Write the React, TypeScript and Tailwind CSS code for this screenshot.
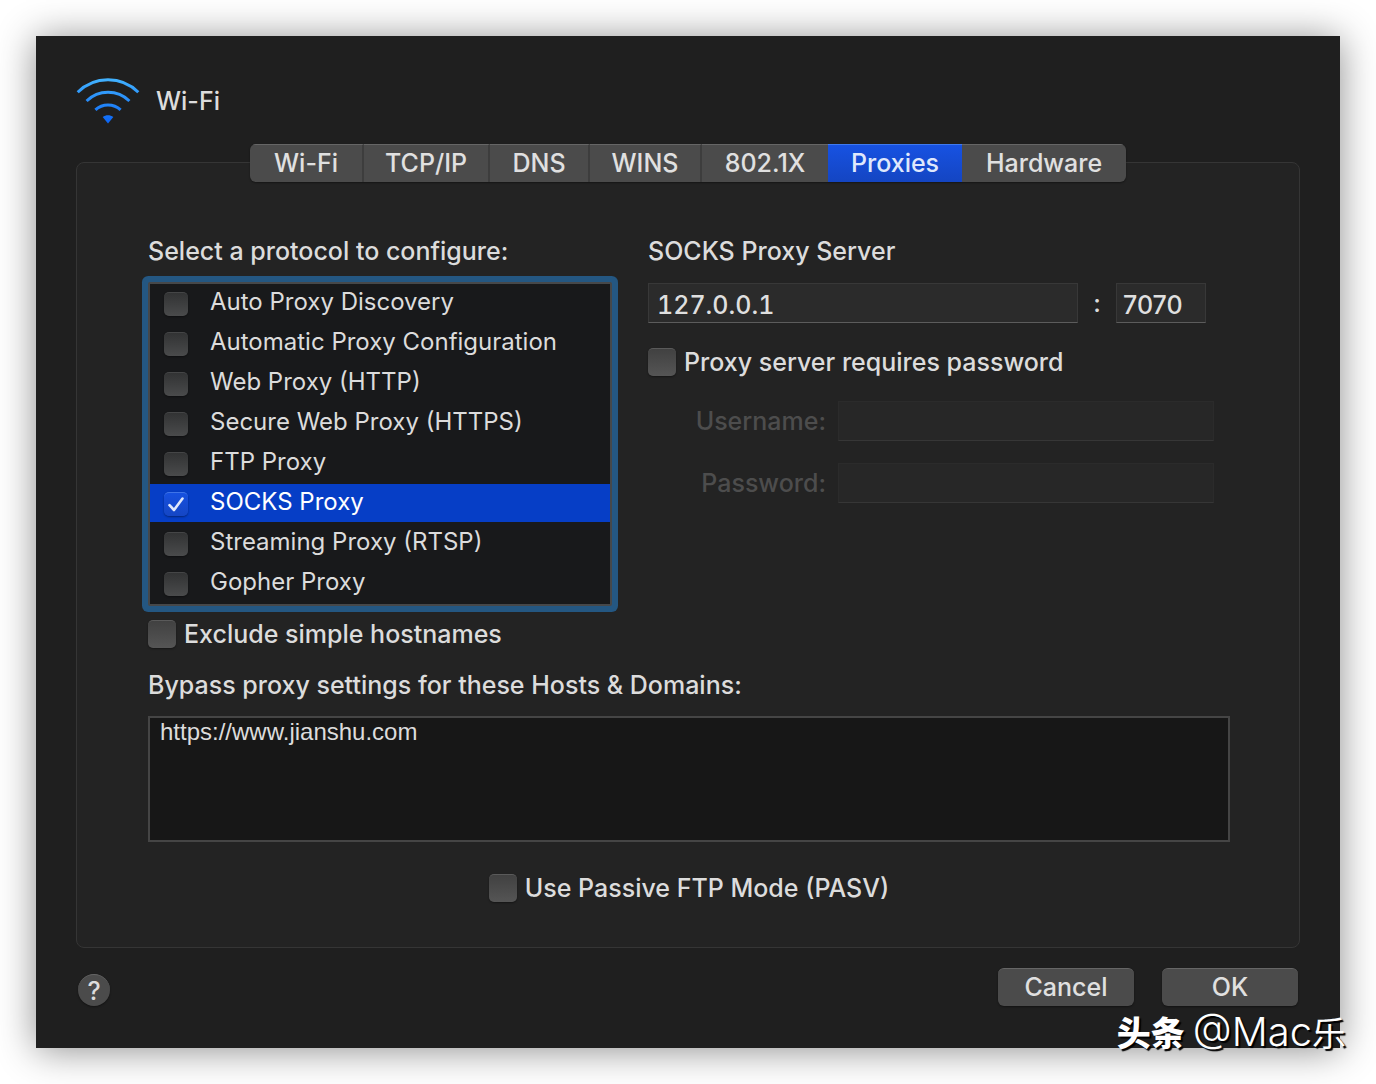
import React, { useState } from 'react';
import clsx from 'clsx';

const tabs = [
  { name: 'Wi-Fi', width: 'w-[114px]' },
  { name: 'TCP/IP', width: 'w-[126px]' },
  { name: 'DNS', width: 'w-[100px]' },
  { name: 'WINS', width: 'w-[112px]' },
  { name: '802.1X', width: 'w-[126px]' },
  { name: 'Proxies', width: 'w-[134px]' },
  { name: 'Hardware', width: 'w-[164px]' },
];

const protocols = [
  'Auto Proxy Discovery',
  'Automatic Proxy Configuration',
  'Web Proxy (HTTP)',
  'Secure Web Proxy (HTTPS)',
  'FTP Proxy',
  'SOCKS Proxy',
  'Streaming Proxy (RTSP)',
  'Gopher Proxy',
];

const WifiIcon: React.FC = () => (
  <svg viewBox="0 1 64 48" className="h-12 w-16" fill="none" aria-hidden="true">
    <defs>
      <linearGradient id="wifi" gradientUnits="userSpaceOnUse" x1="0" y1="2" x2="0" y2="48">
        <stop offset="0" stopColor="#43b4ff" />
        <stop offset="1" stopColor="#0a63f5" />
      </linearGradient>
    </defs>
    <g stroke="url(#wifi)" strokeWidth="3">
      <path d="M1.7 16.2C10 8 20.500 3.700 32 3.700S54 8 62.300 16.200" />
      <path d="M10.600 25C16.500 19.300 23.800 16.300 32 16.300S47.500 19.300 53.400 25" />
      <path d="M19.400 33.900C23 30.500 27.200 28.900 32 28.900S41 30.500 44.600 33.900" />
    </g>
    <path d="M26.700 41C29.900 38.800 34.100 38.800 37.300 41L32 47.600Z" fill="url(#wifi)" />
  </svg>
);

type CheckProps = {
  id: string;
  small?: boolean;
  checked: boolean;
  onChange: () => void;
};

const Checkbox: React.FC<CheckProps> = ({ id, small, checked, onChange }) => (
  <span className={clsx('relative block shrink-0', small ? 'size-6' : 'size-7')}>
    <input
      id={id}
      type="checkbox"
      checked={checked}
      onChange={onChange}
      className={clsx(
        'block size-full appearance-none rounded-[5px] border-t bg-gradient-to-b shadow-[0_1px_2px_rgba(0,0,0,0.4)]',
        checked
          ? 'border-[#3f74e8] from-[#1650df] to-[#1546c4]'
          : small
            ? 'border-[#454647] from-[#323334] to-[#4a4b4c]'
            : 'border-[#5a5a5a] from-[#414141] to-[#555555]'
      )}
    />
    {checked && (
      <svg viewBox="0 0 24 24" className="pointer-events-none absolute inset-0" fill="none" aria-hidden="true">
        <path d="M5.500 13.200L10 18L18.500 6.500" stroke="#dfe7fb" strokeWidth="2.600" strokeLinecap="round" strokeLinejoin="round" />
      </svg>
    )}
  </span>
);

const fieldClass = 'h-10 min-w-0 border border-[#383838] border-b-[#5c5c5c] bg-[#2b2b2b] pt-1 text-[#dfdfdf] outline-none';
const disabledFieldClass = 'h-10 min-w-0 flex-1 border border-[#2b2b2b] border-b-[#363636] bg-[#272727] px-2 outline-none';
const buttonClass =
  'h-[38px] w-[136px] rounded-md border-t border-[#666666] bg-[#4b4b4b] pb-px text-[#e0e0e0] shadow-[0_1px_2px_rgba(0,0,0,0.4)]';

const App: React.FC = () => {
  const [activeTab, setActiveTab] = useState('Proxies');
  const [selected, setSelected] = useState('SOCKS Proxy');
  const [enabled, setEnabled] = useState<string[]>(['SOCKS Proxy']);
  const [host, setHost] = useState('127.0.0.1');
  const [port, setPort] = useState('7070');
  const [needsPassword, setNeedsPassword] = useState(false);
  const [excludeSimple, setExcludeSimple] = useState(false);
  const [passive, setPassive] = useState(false);
  const [bypass, setBypass] = useState('https://www.jianshu.com');

  const toggleProtocol = (name: string) => {
    setSelected(name);
    setEnabled((prev) => (prev.includes(name) ? prev.filter((p) => p !== name) : [...prev, name]));
  };

  return (
    <div className="min-h-screen bg-white p-9 font-['Inter',sans-serif] text-[25px] leading-8 font-[450] text-[#dcdcdc]">
      <main className="relative bg-[#1f1f1f] px-10 pt-10 pb-[42px] shadow-[0_2px_36px_rgba(0,0,0,0.45)]">
        <header className="flex h-[50px] items-center gap-4">
          <WifiIcon />
          <h1>Wi-Fi</h1>
        </header>

        {/* Tabs straddle the top edge of the panel */}
        <nav className="relative z-10 mt-[18px] -mb-5 flex justify-center">
          <div className="flex h-[38px] overflow-hidden rounded-md bg-[#4b4b4b] shadow-[0_1px_2px_rgba(0,0,0,0.4)]">
            {tabs.map((tab, index) => (
              <button
                key={tab.name}
                type="button"
                onClick={() => setActiveTab(tab.name)}
                className={clsx(
                  'border-t pb-px',
                  tab.width,
                  activeTab === tab.name
                    ? 'border-t-[#3f7af0] bg-gradient-to-b from-[#1752e2] to-[#1445c2] text-[#dfe8fc]'
                    : 'border-t-[#666666] text-[#e0e0e0]',
                  index < 4 && 'border-r-2 border-r-[#3d3d3d]'
                )}
              >
                {tab.name}
              </button>
            ))}
          </div>
        </nav>

        <section className="rounded-lg border border-[#353535] bg-[#232323] pt-[72px] pr-[69px] pb-[43px] pl-[71px]">
          <div className="grid grid-cols-[464px_minmax(0,1fr)] gap-9">
            <div>
              <h2>Select a protocol to configure:</h2>
              <ul className="mt-[15px] rounded-xs border-2 border-[#46484a] bg-[#18191b] text-[24px] shadow-[0_0_0_6px_#245782]">
                {protocols.map((name, index) => (
                  <li key={name} className="h-10">
                    <div
                      className={clsx(
                        'flex h-[38px] items-center gap-[22px] pl-3.5',
                        selected === name && 'bg-[#063ec6] text-white'
                      )}
                    >
                      <div className="pt-0.5">
                        <Checkbox
                          id={`protocol-${index}`}
                          small
                          checked={enabled.includes(name)}
                          onChange={() => toggleProtocol(name)}
                        />
                      </div>
                      <label htmlFor={`protocol-${index}`} className="pb-0.5 font-normal">{name}</label>
                    </div>
                  </li>
                ))}
              </ul>
              <div className="mt-3 flex items-center gap-2">
                <Checkbox id="exclude" checked={excludeSimple} onChange={() => setExcludeSimple(!excludeSimple)} />
                <label htmlFor="exclude">Exclude simple hostnames</label>
              </div>
            </div>

            <div>
              <h2 id="server-title">SOCKS Proxy Server</h2>
              <div className="mt-4 flex items-center pr-6">
                <input
                  type="text"
                  aria-labelledby="server-title"
                  value={host}
                  onChange={(e) => setHost(e.target.value)}
                  className={clsx(fieldClass, 'flex-1 px-2 tabular-nums')}
                />
                <span className="w-[38px] text-center">:</span>
                <input
                  type="text"
                  aria-label="Port"
                  value={port}
                  onChange={(e) => setPort(e.target.value)}
                  className={clsx(fieldClass, 'w-[90px] px-1.5')}
                />
              </div>
              <div className="mt-[23px] flex items-center gap-2">
                <Checkbox id="needs-password" checked={needsPassword} onChange={() => setNeedsPassword(!needsPassword)} />
                <label htmlFor="needs-password">Proxy server requires password</label>
              </div>
              <div className="mt-[23px] flex items-center gap-3 pr-4">
                <label htmlFor="username" className="w-[178px] text-right text-[#4d4d4d]">Username:</label>
                <input id="username" type="text" disabled={!needsPassword} className={disabledFieldClass} />
              </div>
              <div className="mt-[22px] flex items-center gap-3 pr-4">
                <label htmlFor="password" className="w-[178px] text-right text-[#4d4d4d]">Password:</label>
                <input id="password" type="password" disabled={!needsPassword} className={disabledFieldClass} />
              </div>
            </div>
          </div>

          <label htmlFor="bypass" className="mt-[19px] block">Bypass proxy settings for these Hosts &amp; Domains:</label>
          <textarea
            id="bypass"
            value={bypass}
            onChange={(e) => setBypass(e.target.value)}
            className="mt-[15px] block h-[126px] w-full resize-none border-2 border-[#454545] bg-[#171717] px-2.5 font-['Liberation_Sans',sans-serif] text-[24px] leading-7 outline-none"
          />
          <div className="mt-[30px] flex items-center justify-center gap-2">
            <Checkbox id="passive" checked={passive} onChange={() => setPassive(!passive)} />
            <label htmlFor="passive">Use Passive FTP Mode (PASV)</label>
          </div>
        </section>

        <footer className="mt-5 flex items-end justify-between px-0.5">
          <button
            type="button"
            aria-label="Help"
            className="flex size-8 items-center justify-center rounded-full border-t border-[#666666] bg-[#4b4b4b] shadow-[0_1px_2px_rgba(0,0,0,0.4)]"
          >
            ?
          </button>
          <div className="flex gap-7">
            <button type="button" className={buttonClass}>Cancel</button>
            <button type="button" className={buttonClass}>OK</button>
          </div>
        </footer>

        <div className="pointer-events-none absolute -right-1.5 -bottom-2.5 flex items-baseline gap-2 font-['Inter','Noto_Sans_CJK_SC',sans-serif] text-[34px] leading-[48px] whitespace-nowrap text-white [text-shadow:2px_2px_1px_#000]">
          <span className="font-black">头条</span>
          <span className="font-normal"><span className="text-[40px] font-light">@Mac</span>乐</span>
        </div>
      </main>
    </div>
  );
};

export default App;
